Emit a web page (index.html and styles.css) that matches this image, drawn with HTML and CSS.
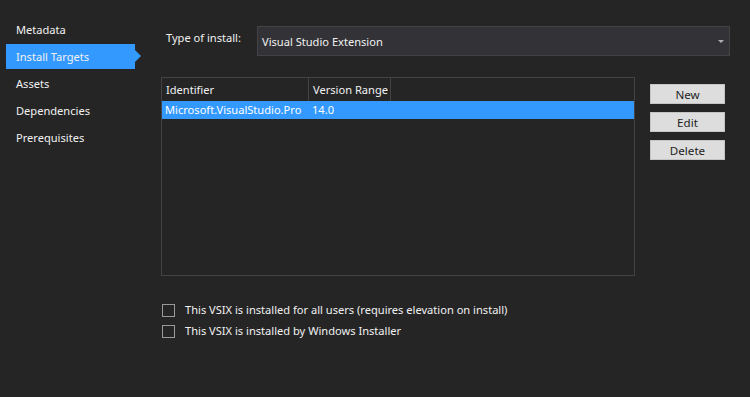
FILE: index.html
```html
<!DOCTYPE html>
<html lang="en">
<head>
<meta charset="UTF-8">
<title>Install Targets</title>
<link rel="stylesheet" href="styles.css">
</head>
<body>
<div class="side">
<div class="nav">Metadata</div>
<div class="nav active">Install Targets</div>
<div class="nav">Assets</div>
<div class="nav">Dependencies</div>
<div class="nav">Prerequisites</div>
</div>

<div class="main">
<div class="type-row">
<div class="type-label">Type of install:</div>
<div class="combo"><span>Visual Studio Extension</span><span class="caret"></span></div>
</div>

<div class="targets">
<div class="list">
<div class="head">
<div class="col c1">Identifier</div>
<div class="col c2">Version Range</div>
<div class="col c3"></div>
</div>
<div class="row sel">
<div class="col c1">Microsoft.VisualStudio.Pro</div>
<div class="col c2">14.0</div>
</div>
</div>
<div class="buttons">
<button>New</button>
<button>Edit</button>
<button>Delete</button>
</div>
</div>

<div class="checks">
<label class="check"><span class="box"></span><span class="txt">This VSIX is installed for all users (requires elevation on install)</span></label>
<label class="check"><span class="box"></span><span class="txt">This VSIX is installed by Windows Installer</span></label>
</div>
</div>
</body>
</html>
```

FILE: styles.css
```css
body{margin:0;height:397px;background:#252526;color:#f1f1f1;font-family:"Noto Sans",sans-serif;font-size:11.1px;display:flex;overflow:hidden}
.side{width:161px;padding-top:17px;box-sizing:border-box;flex:none}
.nav{height:25px;line-height:25px;margin:0 0 2px 6px;width:129px;padding-left:10px;box-sizing:border-box;position:relative}
.nav.active{background:#3399ff}
.nav.active:after{content:"";position:absolute;right:-6px;top:6px;border-left:6px solid #3399ff;border-top:6.5px solid transparent;border-bottom:6.5px solid transparent}
.main{flex:1}
.type-row{display:flex;margin-top:26px;align-items:center}
.type-label{width:96px;padding-left:5px;box-sizing:border-box;margin-top:-7px}
.combo{width:473px;height:30px;box-sizing:border-box;background:#333337;border:1px solid #434346;display:flex;align-items:center;justify-content:space-between;padding:0 5px 0 4px}
.caret{border-top:3px solid #b0b0b0;border-left:3px solid transparent;border-right:3px solid transparent;margin-top:1px}
.targets{display:flex;margin-top:21px}
.list{width:474px;height:199px;box-sizing:border-box;border:1px solid #434346}
.head{display:flex;height:23px;line-height:23px}
.head .col{border-right:1px solid #434346}
.head .c3{border-right:none}
.col{padding-left:4px;box-sizing:border-box;white-space:nowrap;overflow:hidden}
.c1{width:147px}
.c2{width:82px}
.row{display:flex;height:18px;line-height:18px}
.row .c1{padding-left:3px}
.row .c2{padding-left:3px}
.sel{background:#3399ff;color:#fff}
.buttons{margin-left:15px;padding-top:7px;display:flex;flex-direction:column;gap:8px}
button{width:75px;height:20px;background:#dddddd;color:#1e1e1e;border:1px solid #c4c4c4;font-family:"Noto Sans",sans-serif;font-size:11.6px;padding:0}
.checks{margin-top:28px;display:flex;flex-direction:column;gap:8px}
.check{display:flex;align-items:center;height:13px}
.box{width:13px;height:13px;box-sizing:border-box;border:1px solid #9a9a9a;margin:0 10px 0 1px}
.txt{margin-top:-3px}
```
